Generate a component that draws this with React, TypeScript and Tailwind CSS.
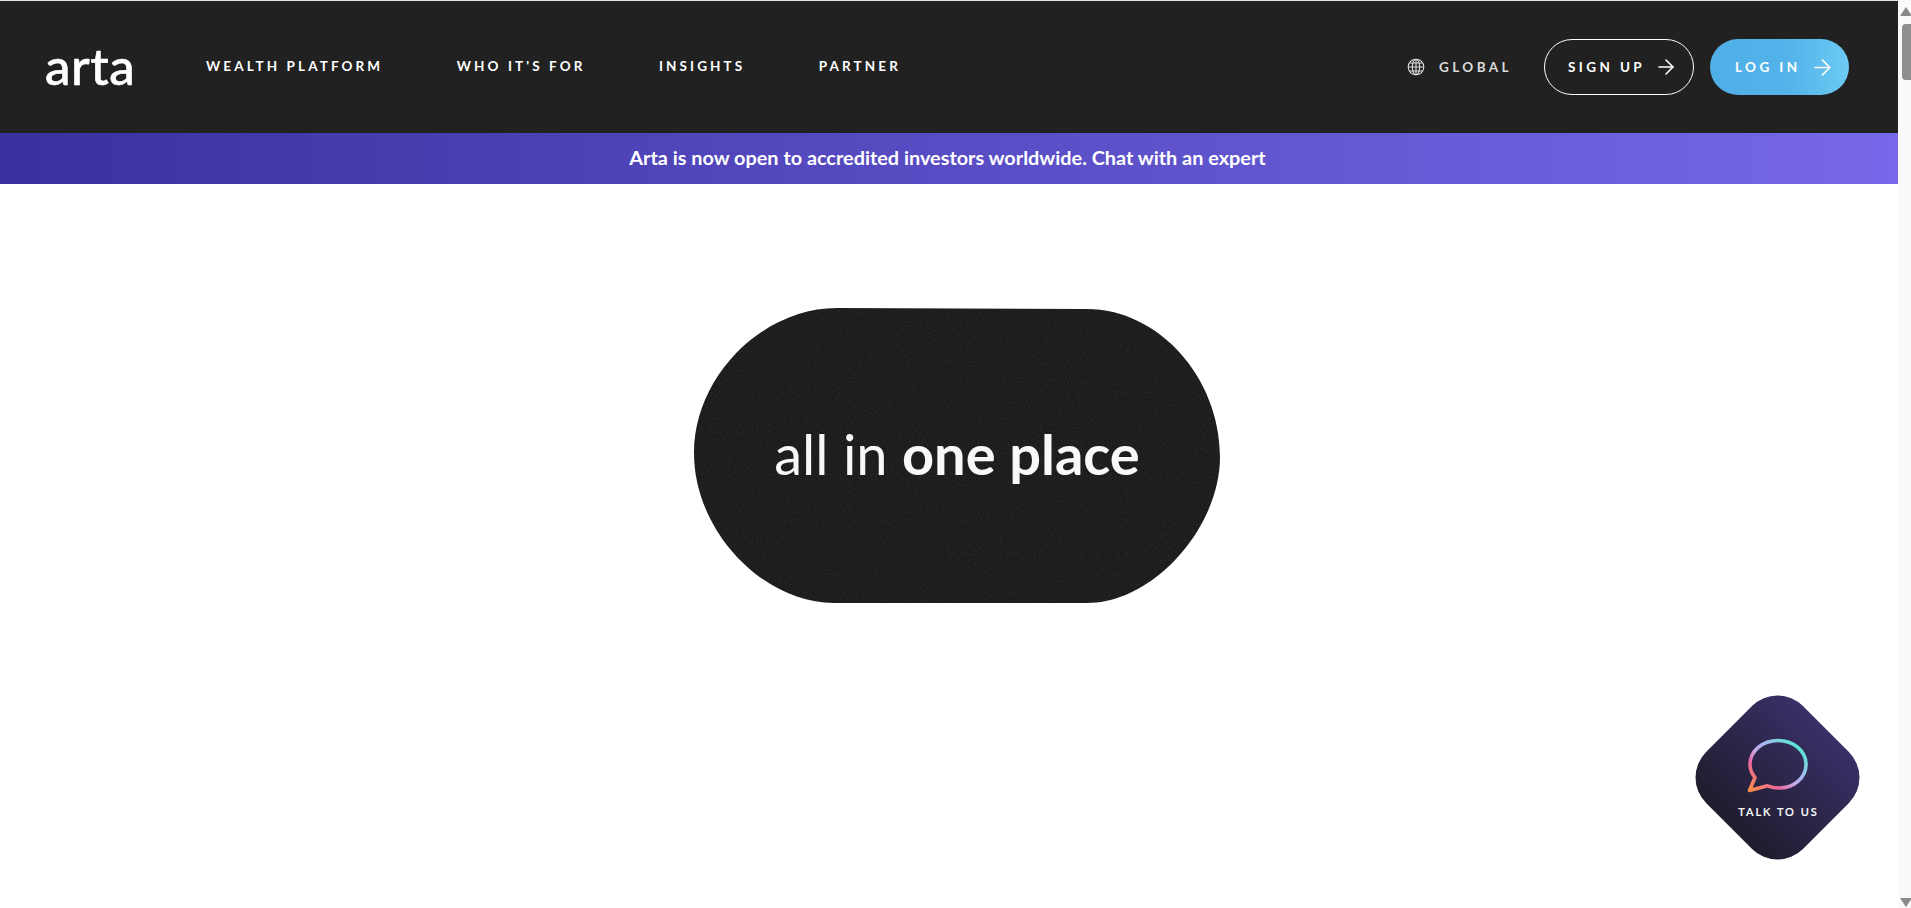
import React from 'react';
import { ArrowRight } from 'lucide-react';

const navLinks = ['WEALTH PLATFORM', "WHO IT'S FOR", 'INSIGHTS', 'PARTNER'];

const GlobeIcon = () => (
  <svg width="18" height="18" viewBox="0 0 18 18" fill="none" stroke="currentColor" strokeWidth="1.1">
    <circle cx="9" cy="9" r="7.8" />
    <ellipse cx="9" cy="9" rx="3.6" ry="7.8" />
    <path d="M9 1.2V16.8M1.2 9H16.8M2.4 5H15.6M2.4 13H15.6" />
  </svg>
);

const ChatBubble = () => (
  <svg width="62" height="56" viewBox="0 0 62 56" fill="none">
    <defs>
      <linearGradient id="bubble" x1="0.05" y1="0.95" x2="0.85" y2="0.15">
        <stop offset="0" stopColor="#ff8a4f" />
        <stop offset="0.3" stopColor="#e8689f" />
        <stop offset="0.5" stopColor="#c9a9e6" />
        <stop offset="0.7" stopColor="#a4b8f0" />
        <stop offset="1" stopColor="#5fe3d5" />
      </linearGradient>
    </defs>
    <path
      d="M2.5 52.5 L8 39.5 C4.8 35.5 3 31 3 26.5 C3 13 15.5 2.5 31 2.5 C46.5 2.5 59 13 59 26.5 C59 40 46.5 50 32 50 C28 50 24 49.2 20.5 47.8 Z"
      stroke="url(#bubble)"
      strokeWidth="3.6"
      strokeLinejoin="round"
    />
  </svg>
);

// the black shape on the page is a slightly wobbly pill, with film grain on it
const Blob = () => (
  <svg className="absolute inset-0" width="527" height="297" viewBox="0 0 527 297">
    <defs>
      <filter id="grain" x="0" y="0" width="100%" height="100%" colorInterpolationFilters="sRGB">
        <feTurbulence type="fractalNoise" baseFrequency="0.9" numOctaves="2" seed="4" />
        <feColorMatrix values="0 0 0 0 1  0 0 0 0 1  0 0 0 0 1  0 0 0 0.14 -0.05" />
        <feComposite in2="SourceGraphic" operator="in" />
        <feMerge>
          <feMergeNode in="SourceGraphic" />
          <feMergeNode />
        </feMerge>
      </filter>
    </defs>
    <path
      d="M143 1 L393 2 C464 2 526 70 526 150 C526 220 460 296 393 296 L140 296 C70 296 0 225 0 146 C0 70 68 1 143 1 Z"
      fill="#1a1a1a"
      filter="url(#grain)"
    />
  </svg>
);

const ScrollBar = () => (
  <aside className="w-[13px] shrink-0 bg-[#fafafa] flex flex-col items-end overflow-hidden">
    <div className="mt-[7px] mr-[-1px] w-0 h-0 border-x-[6px] border-x-transparent border-b-[9px] border-b-[#8a8a8a]" />
    <div className="mt-[8px] w-[9px] h-[56px] rounded-l-[4px] bg-[#8f8f8f]" />
    <div className="mt-auto mb-[1px] mr-[-1px] w-0 h-0 border-x-[6px] border-x-transparent border-t-[9px] border-t-[#8a8a8a]" />
  </aside>
);

export default function App() {
  return (
    <div className="relative flex h-[908px] w-full overflow-hidden bg-white font-['Lato',sans-serif]">
      <main className="flex-1 flex flex-col min-w-0">
        <div className="h-px bg-[#e4e4e4]" />
        <header className="h-[132px] bg-[#212121] flex items-center text-white">
          <a className="ml-[45px] w-[161px] text-[51px] leading-none font-medium tracking-[0.5px] pb-[4px] [-webkit-text-stroke:0.6px_white]">arta</a>
          <nav className="flex items-center gap-[73.5px] pb-[1px]">
            {navLinks.map((link) => (
              <a key={link} className="text-[13.5px] font-bold tracking-[3.1px] whitespace-nowrap">{link}</a>
            ))}
          </nav>
          <div className="ml-auto mr-[49px] flex items-center">
            <a className="flex items-center gap-[14px] text-[#dcdcdc]">
              <GlobeIcon />
              <span className="text-[13.5px] font-bold tracking-[3.4px]">GLOBAL</span>
            </a>
            <button className="ml-[32px] w-[150px] h-[56px] rounded-full border border-white flex items-center pl-[23px] gap-[9px]">
              <span className="text-[13.5px] font-bold tracking-[3.4px]">SIGN UP</span>
              <ArrowRight size={24} strokeWidth={1.6} />
            </button>
            <button className="ml-[16px] w-[139px] h-[56px] rounded-full bg-[linear-gradient(90deg,#50afe8_0%,#53b2e9_55%,#6ccaf3_100%)] flex items-center pl-[25px] gap-[10px]">
              <span className="text-[13.5px] font-bold tracking-[3.4px]">LOG IN</span>
              <ArrowRight size={25} strokeWidth={1.6} />
            </button>
          </div>
        </header>
        <div className="h-[51px] bg-[linear-gradient(90deg,#3a319f_0%,#7668e8_100%)] flex items-center justify-center text-white pb-[1px] pr-[3px]">
          <p className="text-[19.85px] font-bold">Arta is now open to accredited investors worldwide. Chat with an expert</p>
        </div>
        <section className="flex-1 flex justify-center pt-[123px] pl-[17px]">
          <div className="relative w-[527px] h-[297px] flex items-center justify-center text-[#f8f8f8] pb-[4px] pr-[1px]">
            <Blob />
            <p className="relative text-[56px] leading-none">all in <span className="font-bold">one place</span></p>
          </div>
        </section>
      </main>
      <ScrollBar />
      <button className="absolute right-[51px] bottom-[48px] w-[165px] h-[165px] flex items-center justify-center">
        <span className="absolute w-[137px] h-[137px] rounded-[36px] rotate-45 bg-[linear-gradient(0deg,#201c2d_0%,#383067_100%)]" />
        <span className="relative flex flex-col items-center text-white">
          <ChatBubble />
          <span className="mt-[12px] ml-[2px] text-[11px] leading-none font-medium tracking-[2px] whitespace-nowrap [-webkit-text-stroke:0.2px_white]">TALK TO US</span>
        </span>
      </button>
    </div>
  );
}
